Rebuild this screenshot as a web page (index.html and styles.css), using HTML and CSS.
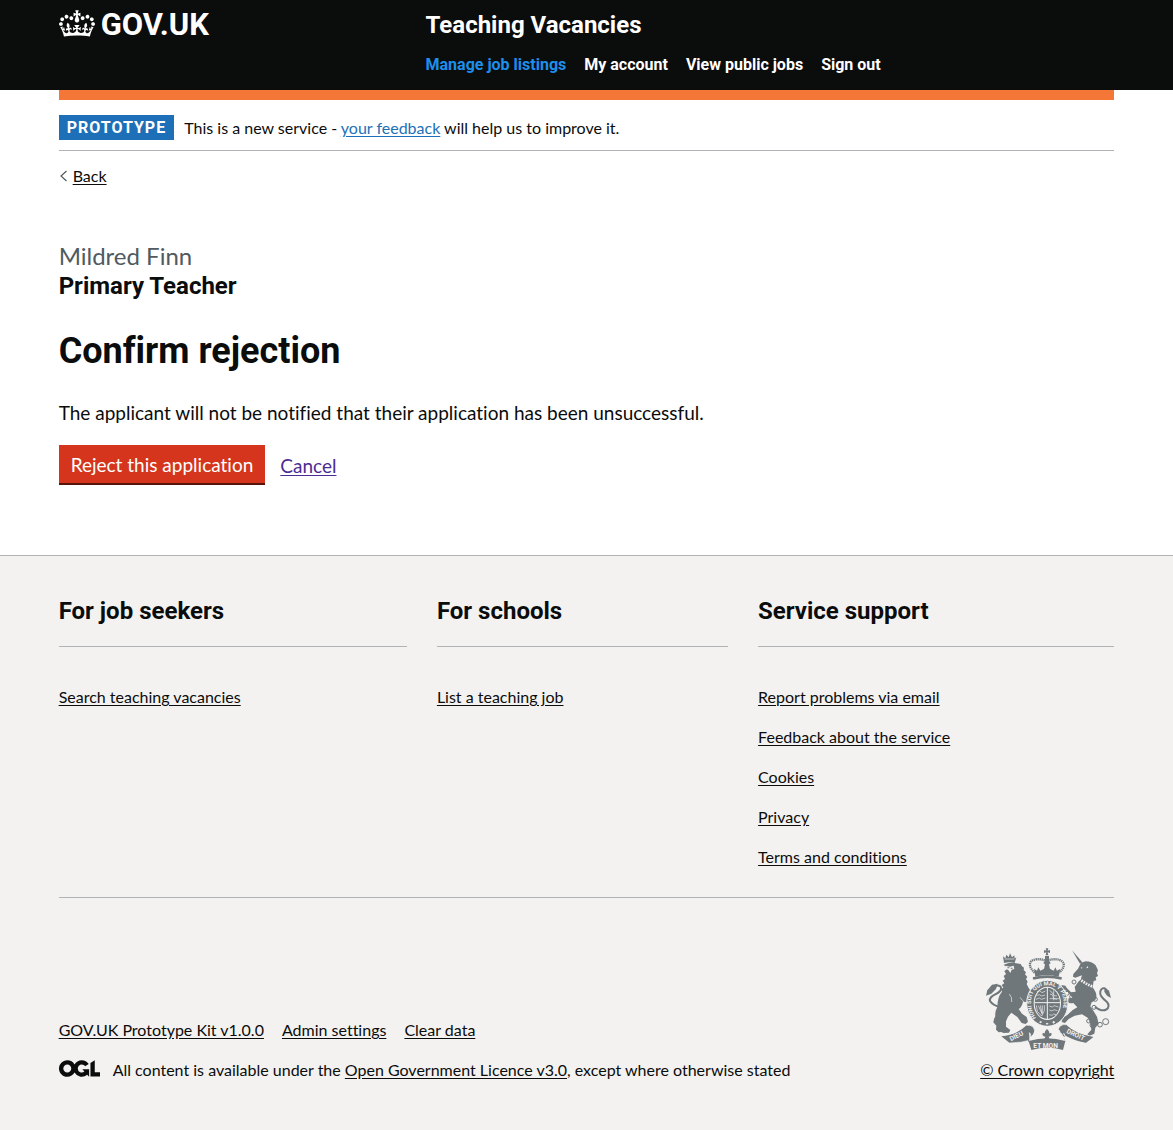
FILE: index.html
```html
<!DOCTYPE html>
<html lang="en">
<head>
<meta charset="utf-8">
<meta name="viewport" content="width=device-width, initial-scale=1">
<title>Confirm rejection - Teaching Vacancies</title>
<link rel="stylesheet" href="styles.css">
</head>
<body>
<header class="header">
  <div class="container header-grid">
    <a class="logo" href="#">
      <svg class="crown" viewBox="0 0 132 97" aria-hidden="true"><path fill="currentColor" fill-rule="evenodd" d="M25 30.2c3.5 1.5 7.7-.2 9.1-3.7 1.5-3.6-.2-7.8-3.9-9.2-3.6-1.4-7.6.3-9.1 3.9-1.4 3.5.3 7.5 3.9 9zM9 39.5c3.6 1.5 7.8-.2 9.2-3.7 1.5-3.6-.2-7.8-3.9-9.1-3.6-1.5-7.6.2-9.1 3.8-1.4 3.5.3 7.5 3.8 9zM4.4 57.2c3.5 1.5 7.7-.2 9.1-3.8 1.5-3.6-.2-7.7-3.9-9.1-3.5-1.5-7.6.3-9.1 3.8-1.4 3.5.3 7.6 3.9 9.1zm38.3-21.4c3.5 1.5 7.7-.2 9.1-3.8 1.5-3.6-.2-7.7-3.9-9.1-3.6-1.5-7.6.3-9.1 3.8-1.3 3.6.4 7.7 3.9 9.1zm64.4-5.6c-3.6 1.5-7.8-.2-9.1-3.7-1.5-3.6.2-7.8 3.8-9.2 3.6-1.4 7.7.3 9.2 3.9 1.3 3.5-.4 7.5-3.9 9zm15.9 9.3c-3.6 1.5-7.7-.2-9.1-3.7-1.5-3.6.2-7.8 3.7-9.1 3.6-1.5 7.7.2 9.2 3.8 1.5 3.5-.3 7.5-3.8 9zm4.7 17.7c-3.6 1.5-7.8-.2-9.2-3.8-1.5-3.6.2-7.7 3.9-9.1 3.6-1.5 7.7.3 9.2 3.8 1.3 3.5-.4 7.6-3.9 9.1zM89.3 35.8c-3.6 1.5-7.8-.2-9.2-3.8-1.4-3.6.2-7.7 3.9-9.1 3.6-1.5 7.7.3 9.2 3.8 1.4 3.6-.3 7.7-3.9 9.1zM69.7 17.7l8.9 4.7V9.3l-8.9 2.8c-.2-.3-.5-.6-.9-.9L72.4 0H59.6l3.5 11.2c-.3.3-.6.5-.9.9l-8.8-2.8v13.1l8.8-4.7c.3.3.6.7.9.9l-5 15.4v.1c-.2.8-.4 1.6-.4 2.4 0 4.1 3.1 7.5 7 8.1h.2c.3 0 .7.1 1 .1.4 0 .7 0 1-.1h.2c4-.6 7.1-4.1 7.1-8.1 0-.8-.1-1.7-.4-2.4V34l-5.1-15.4c.4-.2.7-.6 1-.9zM66 92.8c16.9 0 32.8 1.1 47.1 3.2 4-16.9 8.9-26.7 14-33.5l-9.6-3.4c1 4.9 1.1 7.2 0 10.2-1.5-1.4-3-4.3-4.2-8.7L108.6 76c2.8-2 5-3.2 7.5-3.3-4.4 9.4-10 11.9-13.6 11.2-4.3-.8-6.3-4.6-5.6-7.9 1-4.7 5.7-5.9 8-.5 4.3-8.7-3-11.4-7.6-8.8 7.1-7.2 7.9-13.5 2.1-21.1-8 6.1-8.1 12.3-4.5 20.8-4.7-5.4-12.1-2.5-9.5 6.2 3.4-5.2 7.9-2 7.2 3.1-.6 4.3-6.4 7.8-13.5 7.2-10.3-.9-10.9-8-11.2-13.8 2.5-.5 7.1 1.8 11 7.3L80.2 60c-4.1 4.4-8 5.3-12.3 5.4 1.4-4.4 8-11.6 8-11.6H55.5s6.4 7.2 7.9 11.6c-4.2-.1-8-1-12.3-5.4l1.4 16.4c3.9-5.5 8.5-7.7 10.9-7.3-.3 5.8-.9 12.8-11.1 13.8-7.2.6-12.9-2.9-13.5-7.2-.7-5 3.8-8.3 7.1-3.1 2.7-8.7-4.6-11.6-9.4-6.2 3.7-8.5 3.6-14.7-4.6-20.8-5.8 7.6-5 13.9 2.2 21.1-4.7-2.6-11.9.1-7.7 8.8 2.3-5.5 7.1-4.2 8.1.5.7 3.3-1.3 7.1-5.7 7.9-3.5.7-9-1.8-13.5-11.2 2.5.1 4.7 1.3 7.5 3.3l-4.7-15.4c-1.2 4.4-2.7 7.2-4.3 8.7-1.1-3-.9-5.3 0-10.2l-9.5 3.4c5 6.9 9.9 16.7 14 33.5 14.8-2.1 30.8-3.2 47.7-3.2z"/></svg>
      <span>GOV.UK</span>
    </a>
    <div>
      <a class="service" href="#">Teaching Vacancies</a>
      <nav class="nav" aria-label="Main">
        <a class="current" href="#" aria-current="page">Manage job listings</a>
        <a href="#">My account</a>
        <a href="#">View public jobs</a>
        <a href="#">Sign out</a>
      </nav>
    </div>
  </div>
</header>

<div class="page">
  <div class="container">
    <div class="stripe"></div>
    <div class="phase">
      <strong class="tag">PROTOTYPE</strong>
      <span>This is a new service - <a class="link" href="#">your feedback</a> will help us to improve it.</span>
    </div>
    <a class="back" href="#"><svg viewBox="0 0 9 12" aria-hidden="true"><path d="M7.500 1 2 6l5.500 5" fill="none" stroke="#505a5f" stroke-width="1.200"/></svg><span>Back</span></a>
    <main class="main">
      <p class="applicant">Mildred Finn</p>
      <h2 class="role">Primary Teacher</h2>
      <h1 class="title">Confirm rejection</h1>
      <p class="body">The applicant will not be notified that their application has been unsuccessful.</p>
      <div class="actions">
        <button class="button" type="button">Reject this application</button>
        <a class="visited" href="#">Cancel</a>
      </div>
    </main>
  </div>
</div>

<footer class="footer">
  <div class="container">
    <div class="footer-nav">
      <section>
        <h2>For job seekers</h2>
        <ul><li><a href="#">Search teaching vacancies</a></li></ul>
      </section>
      <section>
        <h2>For schools</h2>
        <ul><li><a href="#">List a teaching job</a></li></ul>
      </section>
      <section>
        <h2>Service support</h2>
        <ul>
          <li><a href="#">Report problems via email</a></li>
          <li><a href="#">Feedback about the service</a></li>
          <li><a href="#">Cookies</a></li>
          <li><a href="#">Privacy</a></li>
          <li><a href="#">Terms and conditions</a></li>
        </ul>
      </section>
    </div>
    <div class="meta">
      <div>
        <div class="meta-links">
          <a href="#">GOV.UK Prototype Kit v1.0.0</a>
          <a href="#">Admin settings</a>
          <a href="#">Clear data</a>
        </div>
        <div class="licence">
          <svg class="ogl" viewBox="0 0 483.200 195.700" aria-hidden="true"><path fill="currentColor" d="M421.500 142.800V.1l-50.700 32.300v161.100h112.400v-50.700zm-122.300-9.600A47.120 47.120 0 0 1 221 97.800c0-26 21.100-47.100 47.100-47.100 16.700 0 31.400 8.700 39.700 21.800l42.700-27.200A97.630 97.630 0 0 0 268.100 0c-36.500 0-68.300 20.100-85.100 49.700A98 98 0 0 0 97.800 0C43.900 0 0 43.900 0 97.800s43.900 97.800 97.800 97.800c36.500 0 68.300-20.100 85.100-49.700a97.760 97.760 0 0 0 149.600 25.400l19.400 22.200h3v-87.800h-80l24.300 27.500zM97.800 145c-26 0-47.100-21.100-47.100-47.100s21.100-47.100 47.100-47.100 47.100 21.100 47.100 47.100S123.800 145 97.800 145"/></svg>
          <span>All content is available under the <a href="#">Open Government Licence v3.0</a>, except where otherwise stated</span>
        </div>
      </div>
      <a class="copyright" href="#">
        <svg class="arms" viewBox="48 38 375 306" aria-hidden="true">
          <!-- lion -->
          <g class="ink">
            <path d="M99 63l7 6 3-11 7 8 4-12 6 12 7-6 1 10 5-5-5 18q-16-5-32 0z"/>
            <path d="M105 87q17-7 34-3l13 2 4 7 6 4-1 7 7 7-3 6 7 8-4 6 5 8-3 7 6 12 10 14-5 16-10 12-12-1q-3 16-13 22l10 14 14 10 4 14-7 7-12-3-13-18-18-13-10 12-6 14 0 16 13 10-4 8-16 1-8-3-7 1-8-8 1-12-9-10 2-10 4-8q-2-14 6-28 0-30 14-46l-4-8 8-4-5-8 8-5-5-8 7-5-4-9 7-6-5-9 6-4-2-10-6-4z"/>
          </g>
          <path class="gap" d="M118 176q9 9 7 24M150 186l10 12 2 16"/>
          <path class="tail" d="M92 216q-24-6-32-19c-4-20 30-18 33-36q2-12-16-10"/>
          <path class="ink" d="M48 181l4-16 14-17 17-3-5 16-14 14z"/>
          <path class="paper" d="M107 91l12 3 12-3 2 10-8 2-4 10-6-9-10-4z"/>
          <path class="ink" d="M112 96h6v3h-6zM122 97h6v3h-6z"/>
          <path class="gap" d="M104 71h28"/>
          <!-- unicorn -->
          <g class="ink">
            <path d="M306 45l31 36-7 4z"/>
            <path d="M333 82l14-4q18 0 30 12l7 15-3 8 3 9-7 4 2 9-8 2-3 18 9 16q8 22-12 30l-4 12 10 15 10 16 5 22-10 11-3 18-14 6-7-4 12-14-3-18-7-17-18-11-22 4-18 10-11 12-10-3 3-12 14-9q14-16 30-23l-12-13q-12 2-18-3l4-11 11-2-15-19-12-6-6-13 12 2 5 8 12 12 14-2-3-14 9-13 10-13 3-9-20 7-7-3 1-8 14-16z"/>
          </g>
          <path class="tail" d="M375 214c30 24 50 2 36-14q-24-18-20-32 5-14 17-7"/>
          <path class="ink" d="M404 156l13 10 6 22-12-7-8-12z"/>
          <path d="M328 130q18 16 43 25" fill="none" stroke="#f3f2f1" stroke-width="8" stroke-dasharray="5 3"/>
          <path class="paper" d="M332 96l6 1-3 3zM352 92l3 5-6 2z"/>
          <g class="chain"><circle cx="376" cy="192" r="6"/><circle cx="372" cy="216" r="6"/><circle cx="356" cy="257" r="6"/><circle cx="366" cy="270" r="6"/><circle cx="390" cy="268" r="7"/><circle cx="407" cy="259" r="9"/><circle cx="312" cy="140" r="6"/><circle cx="291" cy="174" r="6"/><circle cx="305" cy="184" r="6"/></g>
          <!-- royal crown -->
          <path d="M194 112C164 84 184 62 229 76 274 62 298 84 268 112" fill="none" stroke="#6f777b" stroke-width="7" stroke-dasharray="4 2"/>
          <path class="ink" d="M227 39h8l-2 7 7-2v9l-7-2 2 9h-8l2-9-7 2v-9l7 2zM225 62h12v13l5 9-5 3 3 15h-18l3-15-5-3 5-9zM192 100l9 6 4-10 6 10 9-4 11-11 11 11 9 4 5-10 5 10 10-6-5 24q-36-10-70 0z"/>
          <path class="ink" d="M188 126q42-13 88 0l-2 7q-42-10-84 0z"/>
          <!-- garter and shield -->
          <ellipse cx="232" cy="204" rx="62" ry="69" fill="#6f777b" stroke="#f3f2f1" stroke-width="3"/>
          <ellipse cx="232" cy="204" rx="41" ry="50" fill="#f3f2f1"/>
          <ellipse cx="232" cy="204" rx="38" ry="47" fill="#6f777b"/>
          <path d="M232 155v98M193 202h78" stroke="#f3f2f1" stroke-width="3"/>
          <path class="etch" d="M201 170l8-4 7 6 10-5M199 181l9-3 6 4 11-3M198 192l10-4 6 4 12-4M239 166q7 3 10 10t12 6M240 176q9 0 9 8t12 8M251 165v30M239 190h28M238 212l9 3 6-4 12 4M238 224l8 3 6-4 10 3M238 238l8 2 5-4 7 2M199 210l3 18 13 14 8-16v-16M205 211l11 24M211 210l5 25M217 210v25"/>
          <path id="garter" d="M198 248C168 200 186 150 232 150S296 200 266 248" fill="none"/>
          <text class="motto"><textPath href="#garter">HONI SOIT QUI MAL Y PENSE</textPath></text>
          <path class="paper" d="M211 257l5 2-3 5-6-3zM231 262l5 3-5 3-4-3zM250 257l6 3-5 5-4-4z"/>
          <!-- motto ribbon -->
          <path d="M94 303q47-2 76-33 20-3 24 16l-4 17-13-11q4 15 1 28 54-20 108 0l-3-26-15 9-4-18q5-20 25-17 28 29 81 37l-22 17q-48-7-74-28l10 23-10 22q-46-15-86 0l-15-23q-19 7-47 5z" fill="#6f777b" stroke="#f3f2f1" stroke-width="2"/>
          <path class="ink" d="M94 303l24 19q36-2 60-22l-8-30q-30 30-76 33zM289 270l-7 24q30 24 66 28l22-17q-52-8-81-35z"/>
          <path class="paper" d="M180 303q8 1 15-18l22-12h30l22 12q7 20 17 18l-4 16q-50-12-100 0z"/>
          <path d="M176 317q55-16 110 0l-7 27q-46-13-95 0z" fill="#6f777b"/>
          <path d="M172 281q15-2 14 10l-3 12M290 279q-17 0-14 13l7 12" fill="none" stroke="#6f777b" stroke-width="3"/>
          <g class="scroll"><text x="123" y="318" transform="rotate(-27 123 318)">DIEU</text><text x="190" y="337">ET MON</text><text x="288" y="292" transform="rotate(25 288 292)">DROIT</text></g>
          <path class="ink" d="M231 281q12 10 3 20 0-9 10-8 3 10-8 11l4 11h-18l4-11q-11-1-8-11 10-1 10 8-9-10 3-20z"/>
        </svg>
        <span>© Crown copyright</span>
      </a>
    </div>
  </div>
</footer>
</body>
</html>
```
FILE: styles.css
```css
* { box-sizing: border-box; }
body {
  margin: 0;
  background: #f3f2f1;
  color: #0b0c0c;
  font: 16px/20px Lato, "Liberation Sans", sans-serif;
  font-variant-ligatures: none;
}
h1, h2, p, ul { margin: 0; padding: 0; }
h1, h2, .logo, .service, .nav, .tag { font-family: Roboto, "Liberation Sans", sans-serif; font-weight: 700; }
ul { list-style: none; }
a { color: inherit; text-underline-offset: 2px; }
.container { margin: 0 5%; }

.header { background: #0b0c0c; color: #fff; }
.header a { text-decoration: none; }
.header-grid {
  display: grid;
  grid-template-columns: 1fr 2fr;
  min-height: 90px;
}
.header-grid > div { padding: 10px 15px 0; }
.logo {
  display: flex;
  align-items: flex-start;
  align-self: start;
  gap: 6px;
  padding-top: 10px;
  font-size: 31px;
  line-height: 30px;
}
.crown { width: 36px; height: 27px; }
.service { display: block; font-size: 24px; line-height: 30px; }
.nav { display: flex; gap: 18px; padding-top: 15px; white-space: nowrap; }
.current { color: #1d8feb; }

.page { display: flow-root; background: #fff; }
.stripe { height: 10px; background: #f47738; }
.phase {
  display: flex;
  align-items: center;
  gap: 10px;
  padding: 15px 0 10px;
  border-bottom: 1px solid #b1b4b6;
}
.tag {
  padding: 3px 8px 2px;
  background: #1d70b8;
  color: #fff;
  letter-spacing: 1px;
}
.link { color: #1d70b8; }
.back { display: inline-flex; align-items: center; gap: 5px; margin-top: 15px; text-decoration: none; }
.back svg { width: 9px; height: 12px; }
.back span { text-decoration: underline; }
.main { padding: 55px 0 70px; }
.applicant { color: #505a5f; font-size: 24px; line-height: 30px; }
.role { font-size: 24px; line-height: 30px; }
.title { margin: 25px 0 24px; font-size: 36px; line-height: 50px; }
.body { font-size: 19px; line-height: 25px; }
.actions { display: flex; align-items: center; gap: 15px; margin-top: 20px; font-size: 19px; line-height: 25px; }
.button {
  height: 40px;
  padding: 0 12px;
  border: 0;
  border-bottom: 2px solid #55150b;
  background: #d4351c;
  color: #fff;
  font: inherit;
}
.visited { color: #4c2c92; }

.footer { border-top: 1px solid #b1b4b6; padding: 40px 0; }
.footer-nav {
  display: grid;
  grid-template-columns: 348fr 291fr 356fr;
  gap: 30px;
  padding-bottom: 30px;
  border-bottom: 1px solid #b1b4b6;
}
.footer h2 {
  padding-bottom: 20px;
  border-bottom: 1px solid #b1b4b6;
  font-size: 24px;
  line-height: 30px;
}
.footer ul { display: grid; gap: 20px; padding-top: 40px; }
.meta { display: flex; justify-content: space-between; align-items: flex-end; gap: 30px; padding-top: 50px; }
.meta-links { display: flex; gap: 18px; padding-bottom: 20px; }
.licence { display: flex; align-items: flex-start; gap: 13px; }
.ogl { width: 41px; height: 17px; }
.copyright { display: flex; flex-direction: column; align-items: flex-end; gap: 10px; }
.arms { width: 125px; height: 102px; margin-right: 3px; }
.ink { fill: #6f777b; }
.paper { fill: #f3f2f1; }
.tail { fill: none; stroke: #6f777b; stroke-width: 6; }
.gap { fill: none; stroke: #f3f2f1; stroke-width: 2; }
.chain { fill: none; stroke: #6f777b; stroke-width: 3; }
.etch { fill: none; stroke: #f3f2f1; stroke-width: 2; }
.motto, .scroll { fill: #f3f2f1; font-family: Roboto, sans-serif; font-weight: 700; font-size: 17px; }
.scroll { font-size: 20px; }
```
